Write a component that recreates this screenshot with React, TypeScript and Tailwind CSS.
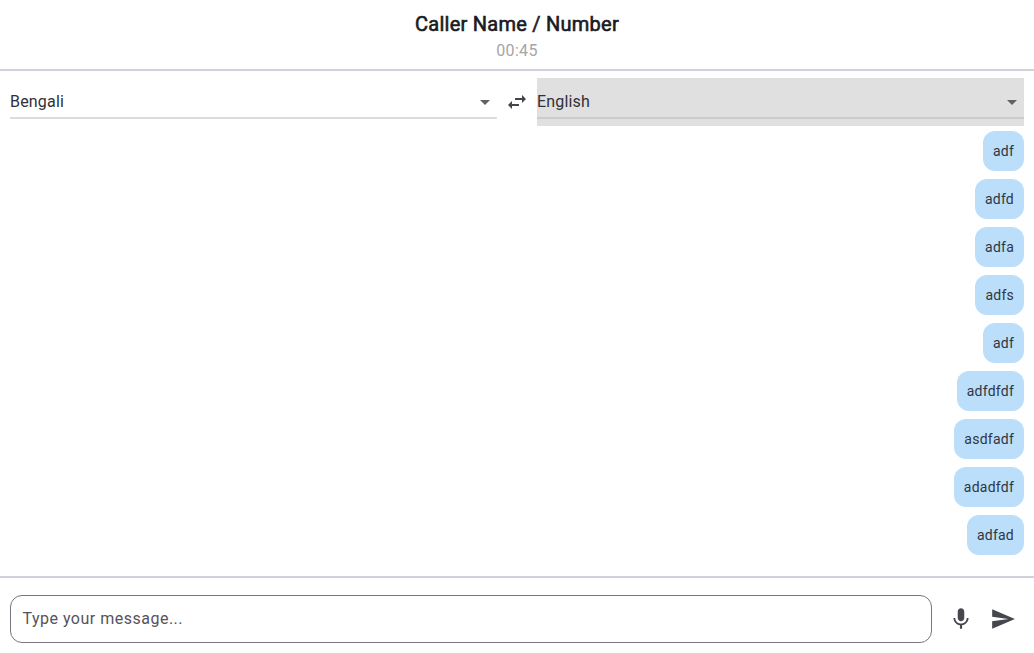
import React from "react";

const messages = ["adf", "adfd", "adfa", "adfs", "adf", "adfdfdf", "asdfadf", "adadfdf", "adfad"];

function LanguageSelect({ label, focused = false }: { label: string; focused?: boolean }) {
  return (
    <button
      className={
        "flex h-12 flex-1 flex-col text-left text-base " + (focused ? "bg-[#e0e0e0]" : "bg-white")
      }
    >
      <span className="flex h-[39px] w-full shrink-0 items-center justify-between pt-[9px]">
        <span className="leading-6 tracking-[0.18px] text-[#303036]">{label}</span>
        <svg className="h-6 w-6 fill-[#616161]" viewBox="0 0 24 24">
          <path d="M7 10l5 5 5-5z" />
        </svg>
      </span>
      <span className={"h-0.5 w-full shrink-0 " + (focused ? "bg-[#cccccc]" : "bg-[#dcdcdc]")} />
    </button>
  );
}

export default function App() {
  return (
    <div className="flex h-[653px] w-full flex-col bg-white font-[Roboto,sans-serif] text-[#1c1b1f]">
      <header className="flex h-[71px] shrink-0 flex-col items-center border-b-2 border-[#d2d1db] pt-[10px]">
        <h1 className="text-xl leading-7 font-normal tracking-[0.25px] [-webkit-text-stroke:0.6px_#1a1b21]">
          Caller Name / Number
        </h1>
        <p className="pt-px text-base leading-6 tracking-[0.3px] text-[#a5a5a5]">00:45</p>
      </header>
      <div className="flex h-[55px] shrink-0 px-[10px] pt-[7px]">
        <LanguageSelect label="Bengali" />
        <button className="flex h-12 w-10 items-center justify-center">
          <svg className="h-6 w-6 fill-[#45434b]" viewBox="0 0 24 24">
            <path d="M6.99 11 3 15l3.99 4v-3H14v-2H6.99v-3zM21 9l-3.99-4v3H10v2h7.01v3L21 9z" />
          </svg>
        </button>
        <LanguageSelect label="English" focused />
      </div>
      <main className="flex flex-1 flex-col items-end gap-2 px-[10px] pt-[5px]">
        {messages.map((message, index) => (
          <div
            key={index}
            className="flex h-10 items-center rounded-xl bg-[#bbdefb] px-[10px] text-sm leading-5 tracking-[0.24px] text-[#303642]"
          >
            {message}
          </div>
        ))}
      </main>
      <footer className="flex h-[77px] shrink-0 items-start border-t-2 border-[#d2d1db] px-[10px] pt-[17px]">
        <div className="flex h-12 flex-1 items-center rounded-xl border border-[#777680] px-[11px]">
          <span className="pl-[0.4px] text-base leading-6 tracking-[0.5px] text-[#55535c]">Type your message...</span>
        </div>
        <div className="flex h-12 items-center gap-4 pr-[8px] pl-4">
          <svg className="h-[26px] w-[26px] fill-[#46464f]" viewBox="0 0 24 24">
            <path d="M12 14c1.66 0 2.99-1.34 2.99-3L15 5c0-1.66-1.34-3-3-3S9 3.34 9 5v6c0 1.66 1.34 3 3 3zm5.3-3c0 3-2.54 5.1-5.3 5.1S6.7 14 6.7 11H5c0 3.41 2.72 6.23 6 6.72V21h2v-3.28c3.28-.48 6-3.3 6-6.72h-1.7z" />
          </svg>
          <svg className="h-[26px] w-[26px] fill-[#46464f]" viewBox="0 0 24 24">
            <path d="M2.01 21L23 12 2.01 3 2 10l15 2-15 2z" />
          </svg>
        </div>
      </footer>
    </div>
  );
}
